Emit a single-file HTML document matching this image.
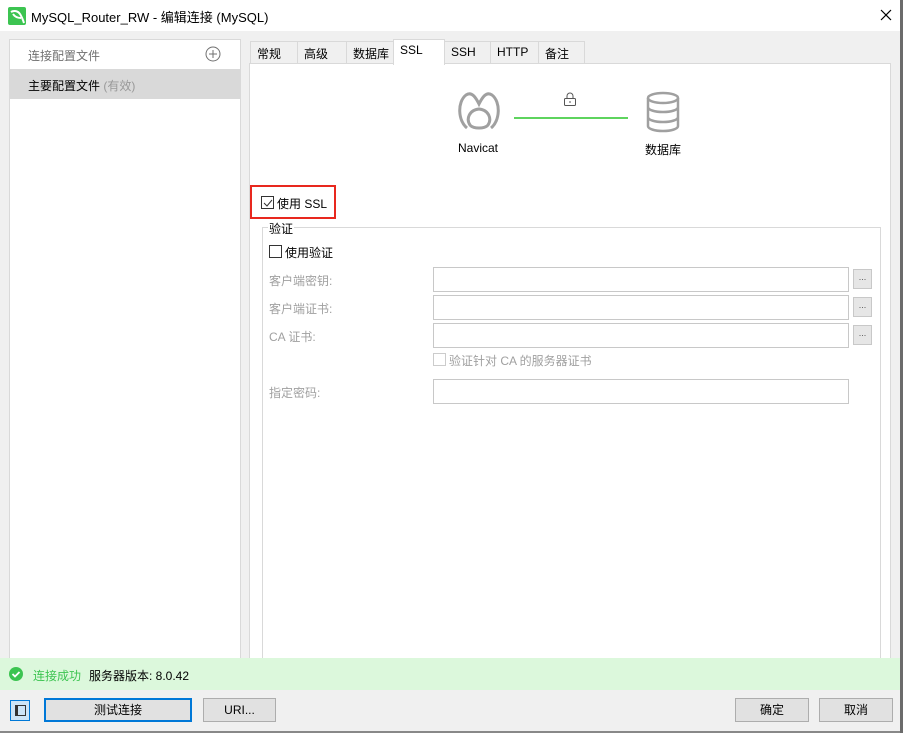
<!DOCTYPE html>
<html><head><meta charset="utf-8"><style>
*{box-sizing:border-box;margin:0;padding:0}
body{width:903px;height:733px;overflow:hidden;background:#f0f0f0;font-family:"Liberation Sans","Noto Sans CJK SC",sans-serif;font-size:12px;color:#000;position:relative}
.a{position:absolute}
.tab{position:absolute;top:41px;height:23px;border:1px solid #d9d9d9;background:#f0f0f0;padding:3px 0 0 6px;font-size:12px}
.lbl{position:absolute;left:269px;color:#a0a0a0;font-size:12px}
.inp{position:absolute;left:433px;width:416px;height:25px;border:1px solid #c8c8c8;background:#fff}
.dot{position:absolute;left:853px;width:19px;height:20px;border:1px solid #c8c8c8;background:#e6e6e6;font-size:9px;text-align:center;color:#555;line-height:14px}
.btn{position:absolute;top:698px;height:24px;border:1px solid #adadad;background:#e1e1e1;text-align:center;line-height:22px;font-size:12px}
</style></head><body>
<div class="a" style="left:0;top:0;width:900px;height:31px;background:#fff"></div>
<div class="a" style="left:900px;top:0;width:3px;height:733px;background:#6b6b6b"></div>
<div class="a" style="left:0;top:731px;width:900px;height:2px;background:#888"></div>
<svg class="a" style="left:8px;top:7px" width="18" height="18"><rect width="18" height="18" rx="2" fill="#3cc451"/><path d="M3 5c3-2 7-1 9 2c2 3 3 6 4 9M5 7c2 3 5 4 8 4" stroke="#fff" stroke-width="2" fill="none"/></svg>
<div class="a" style="left:31px;top:7px;font-size:13px">MySQL_Router_RW - 编辑连接 (MySQL)</div>
<svg class="a" style="left:880px;top:9px" width="12" height="12"><path d="M1 1L11 11M11 1L1 11" stroke="#000" stroke-width="1.2"/></svg>

<div class="a" style="left:9px;top:39px;width:232px;height:620px;background:#fff;border:1px solid #d9d9d9"></div>
<div class="a" style="left:28px;top:47px;color:#707070">连接配置文件</div>
<svg class="a" style="left:205px;top:46px" width="16" height="16"><circle cx="8" cy="8" r="7" stroke="#707070" fill="none"/><path d="M8 4v8M4 8h8" stroke="#707070"/></svg>
<div class="a" style="left:10px;top:69px;width:230px;height:30px;background:#d9d9d9"></div>
<div class="a" style="left:28px;top:77px">主要配置文件 <span style="color:#999">(有效)</span></div>

<div class="a" style="left:249px;top:63px;width:642px;height:597px;background:#fff;border:1px solid #d9d9d9"></div>
<div class="tab" style="left:250px;width:48px">常规</div>
<div class="tab" style="left:297px;width:50px">高级</div>
<div class="tab" style="left:346px;width:48px">数据库</div>
<div class="tab" style="left:393px;top:39px;height:26px;width:52px;background:#fff;border-bottom:none">SSL</div>
<div class="tab" style="left:444px;width:47px">SSH</div>
<div class="tab" style="left:490px;width:49px">HTTP</div>
<div class="tab" style="left:538px;width:47px">备注</div>

<svg class="a" style="left:456px;top:90px" width="46" height="42" fill="none" stroke="#a0a0a0" stroke-width="3"><path d="M11 38C2 31 1 12 10 5C16 1 20 8 23 14C26 8 30 1 36 5C45 12 44 31 35 38"/><path d="M14 35C10 29 13 20 23 19C33 20 36 29 32 35C29 39 17 39 14 35Z"/></svg>
<div class="a" style="left:458px;top:141px;font-size:12px">Navicat</div>
<div class="a" style="left:514px;top:117px;width:114px;height:2px;background:#5ed45e"></div>
<svg class="a" style="left:563px;top:92px" width="14" height="15" fill="none" stroke="#555"><rect x="1.5" y="6.5" width="11" height="7" rx="1"/><path d="M4 6.5V4a3 3 0 0 1 6 0v2.5M7 9v2"/></svg>
<svg class="a" style="left:645px;top:91px" width="36" height="42" fill="none" stroke="#a0a0a0" stroke-width="2.5"><ellipse cx="18" cy="7" rx="15" ry="5"/><path d="M3 7v28c0 3 7 5 15 5s15-2 15-5V7M3 16c0 3 7 5 15 5s15-2 15-5M3 26c0 3 7 5 15 5s15-2 15-5"/></svg>
<div class="a" style="left:645px;top:141px">数据库</div>

<div class="a" style="left:250px;top:185px;width:86px;height:34px;border:2px solid #e8281e"></div>
<div class="a" style="left:261px;top:196px;width:13px;height:13px;border:1px solid #333"></div>
<svg class="a" style="left:262px;top:197px" width="12" height="12"><path d="M2 6l3 3l5-6" stroke="#333" fill="none"/></svg>
<div class="a" style="left:277px;top:195px">使用 SSL</div>

<div class="a" style="left:262px;top:227px;width:619px;height:432px;border:1px solid #d9d9d9"></div>
<div class="a" style="left:268px;top:220px;background:#fff;padding:0 1px">验证</div>
<div class="a" style="left:269px;top:245px;width:13px;height:13px;border:1px solid #333"></div>
<div class="a" style="left:285px;top:244px">使用验证</div>
<div class="lbl" style="top:272px">客户端密钥:</div>
<div class="lbl" style="top:300px">客户端证书:</div>
<div class="lbl" style="top:328px">CA 证书:</div>
<div class="lbl" style="top:384px">指定密码:</div>
<div class="inp" style="top:267px"></div>
<div class="inp" style="top:295px"></div>
<div class="inp" style="top:323px"></div>
<div class="inp" style="top:379px"></div>
<div class="dot" style="top:269px">...</div>
<div class="dot" style="top:297px">...</div>
<div class="dot" style="top:325px">...</div>
<div class="a" style="left:433px;top:353px;width:13px;height:13px;border:1px solid #ccc"></div>
<div class="a" style="left:449px;top:352px;color:#a0a0a0">验证针对 CA 的服务器证书</div>

<div class="a" style="left:0;top:658px;width:900px;height:32px;background:#dcf8dc"></div>
<svg class="a" style="left:9px;top:667px" width="14" height="14"><circle cx="7" cy="7" r="7" fill="#3cc451"/><path d="M3.5 7l2.5 2.5l4.5-4.5" stroke="#fff" stroke-width="1.8" fill="none"/></svg>
<div class="a" style="left:33px;top:667px;color:#3cc451">连接成功</div>
<div class="a" style="left:89px;top:667px">服务器版本: 8.0.42</div>

<div class="a" style="left:10px;top:700px;width:20px;height:21px;border:1px solid #0078d7;background:#cce4f7"></div>
<div class="a" style="left:15px;top:705px;width:11px;height:11px;border:1px solid #333;border-left-width:3px"></div>
<div class="btn" style="left:44px;width:148px;border:2px solid #0078d7;line-height:20px">测试连接</div>
<div class="btn" style="left:203px;width:73px">URI...</div>
<div class="btn" style="left:735px;width:74px">确定</div>
<div class="btn" style="left:819px;width:74px">取消</div>
</body></html>
